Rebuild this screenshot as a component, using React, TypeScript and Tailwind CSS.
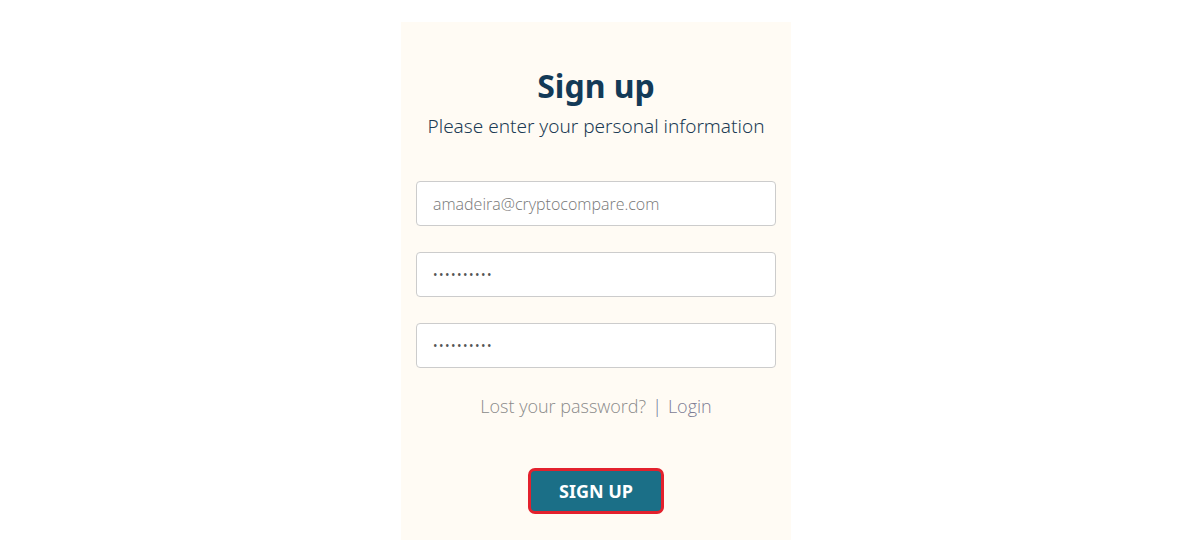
export default function App() {
  return (
    <div className="min-h-[540px] w-full bg-white">
      <div className="ml-[401px] mt-[22px] h-[518px] w-[390px] bg-[#fffbf4] px-[15px] pt-[44px]">
        <h1 className="text-center font-['Noto_Sans',sans-serif] text-[32px] leading-[40px] font-bold text-[#133a57]">
          Sign up
        </h1>
        <p className="mt-[7px] text-center font-['Noto_Sans',sans-serif] text-[19px] leading-[26px] font-light text-[#1c3b55]">
          Please enter your personal information
        </p>
        <form className="mt-[42px] flex flex-col gap-[26px]" onSubmit={(e) => e.preventDefault()}>
          <input
            type="email"
            defaultValue="amadeira@cryptocompare.com"
            className="h-[45px] w-full rounded-[4px] border border-[#cccccc] bg-white px-[16px] font-['Open_Sans',sans-serif] text-[16px] font-light text-[#777777] outline-none"
          />
          <input
            type="password"
            defaultValue="1234567890"
            className="h-[45px] w-full rounded-[4px] border border-[#cccccc] bg-white px-[16px] font-['Open_Sans',sans-serif] text-[12px] tracking-[1.5px] text-[#555555] outline-none"
          />
          <input
            type="password"
            defaultValue="1234567890"
            autoFocus
            className="h-[45px] w-full rounded-[4px] border border-[#cccccc] bg-white px-[16px] font-['Open_Sans',sans-serif] text-[12px] tracking-[1.5px] text-[#555555] caret-[#222222] outline-none"
          />
        </form>
        <div className="mt-[24px] text-center font-['Open_Sans',sans-serif] text-[18px] leading-[28px] font-light text-[#8a8a8a]">
          <a href="#">Lost your password?</a>
          <span className="mx-[6px] text-[#6f7a98]">|</span>
          <a href="#" className="text-[#7d7d95]">Login</a>
        </div>
        <div className="mt-[48px] flex justify-center">
          <button
            type="button"
            className="h-[46px] w-[136px] rounded-[7px] border-[3px] border-[#e3212d] bg-[#1b6f87] font-['Noto_Sans',sans-serif] text-[18px] font-bold text-white"
          >
            SIGN UP
          </button>
        </div>
      </div>
    </div>
  )
}
